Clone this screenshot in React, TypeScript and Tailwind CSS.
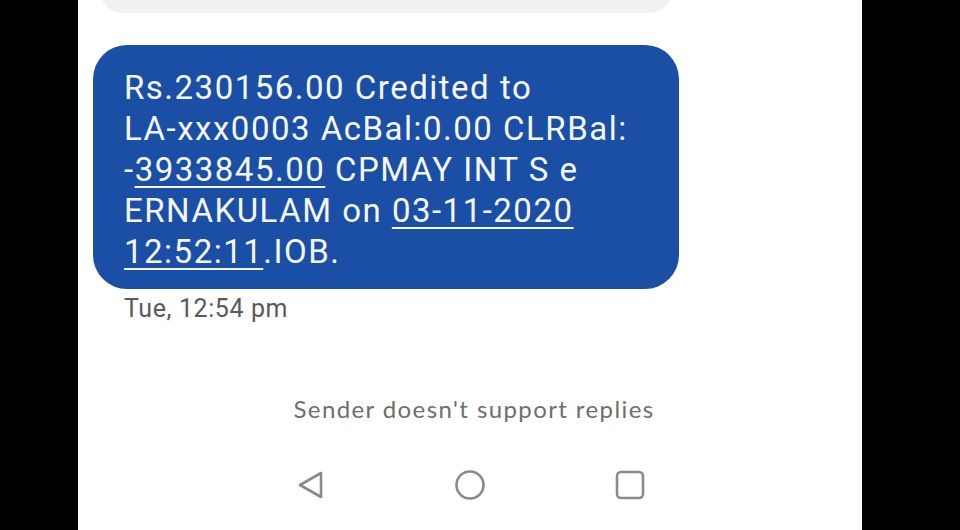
import React from "react";

export default function App() {
  return (
    <div className="w-[960px] h-[530px] bg-black flex overflow-hidden">
      <div className="w-[78px] shrink-0" />
      <div className="w-[784px] h-full bg-white flex flex-col relative" style={{ fontFamily: "Roboto, 'Noto Sans', sans-serif" }}>
        <div className="ml-[22px] w-[572px] h-[45px] -mt-[32px] rounded-[32px] bg-[#f0f1f3] shrink-0" />
        <div className="ml-[15px] mt-[32px] w-[586px] h-[244px] rounded-[34px] bg-[#1b4fa5] text-[#f4f7fc] text-[33px] leading-[41px] pl-[31px] pt-[22px] tracking-[1.5px] shrink-0">
          <div>Rs.230156.00 Credited to</div>
          <div>LA-xxx0003 AcBal:0.00 CLRBal:</div>
          <div>-<span className="underline decoration-[2px] underline-offset-[5px]">3933845.00</span> CPMAY INT S e</div>
          <div>ERNAKULAM on <span className="underline decoration-[2px] underline-offset-[5px]">03-11-2020</span></div>
          <div><span className="underline decoration-[2px] underline-offset-[5px]">12:52:11</span>.IOB.</div>
        </div>
        <div className="ml-[46px] mt-[3px] text-[25px] leading-[34px] tracking-[0.6px] text-[#5a5a5a]">Tue, 12:54 pm</div>
        <div className="mt-[66px] text-center text-[24px] leading-[34px] tracking-[1.4px] text-[#6e6e6e] pl-[8px]" style={{ fontFamily: "Lato, 'Open Sans', sans-serif" }}>
          Sender doesn't support replies
        </div>
        <div className="mt-[43px] flex justify-center">
          <div className="flex items-center justify-between w-[350px] ml-[2px]">
            <svg width="30" height="30" viewBox="0 0 30 30">
              <path d="M25 3 L4 15 L25 27 Z" fill="none" stroke="#8a8a8a" strokeWidth="2.6" strokeLinejoin="round" />
            </svg>
            <svg width="32" height="32" viewBox="0 0 32 32">
              <circle cx="16" cy="16" r="13.5" fill="none" stroke="#8a8a8a" strokeWidth="2.6" />
            </svg>
            <svg width="32" height="32" viewBox="0 0 32 32">
              <rect x="3" y="3" width="26" height="26" rx="4" fill="none" stroke="#8a8a8a" strokeWidth="2.6" />
            </svg>
          </div>
        </div>
      </div>
      <div className="flex-1" />
    </div>
  );
}
